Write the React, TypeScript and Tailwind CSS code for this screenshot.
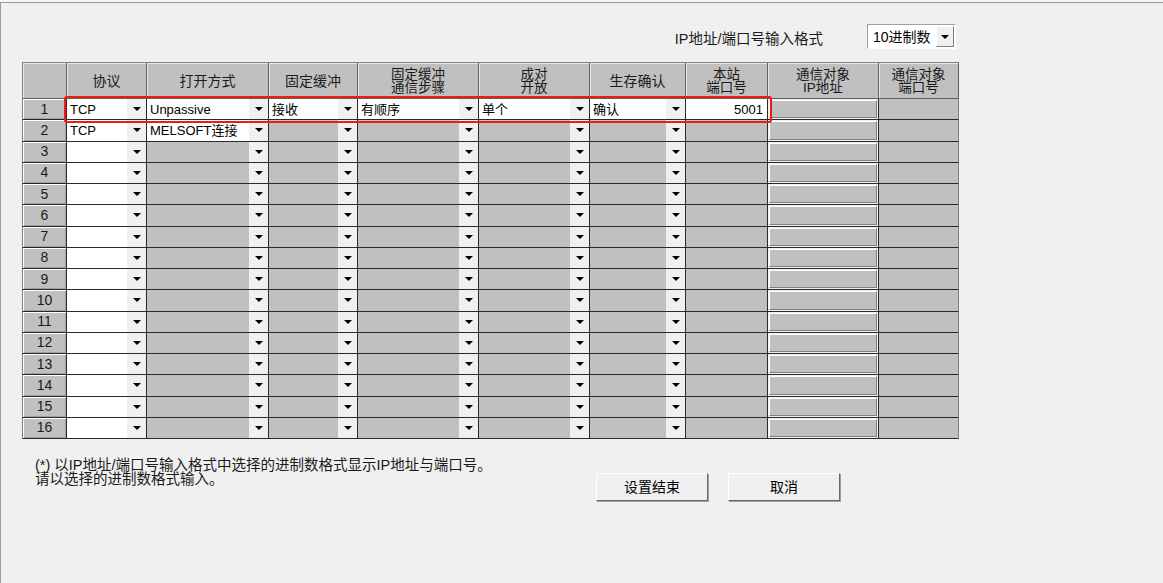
import React from 'react';

type Kind = 'num' | 'combo' | 'text' | 'button' | 'plain';

interface Col {
  w: number;
  kind: Kind;
  title: string[];
}

const cols: Col[] = [
  { w: 45, kind: 'num', title: [] },
  { w: 80, kind: 'combo', title: ['协议'] },
  { w: 122, kind: 'combo', title: ['打开方式'] },
  { w: 89, kind: 'combo', title: ['固定缓冲'] },
  { w: 121, kind: 'combo', title: ['固定缓冲', '通信步骤'] },
  { w: 111, kind: 'combo', title: ['成对', '开放'] },
  { w: 96, kind: 'combo', title: ['生存确认'] },
  { w: 82, kind: 'text', title: ['本站', '端口号'] },
  { w: 111, kind: 'button', title: ['通信对象', 'IP地址'] },
  { w: 80, kind: 'plain', title: ['通信对象', '端口号'] },
];

const row1 = ['', 'TCP', 'Unpassive', '接收', '有顺序', '单个', '确认', '5001', '', ''];
const row2 = ['', 'TCP', 'MELSOFT连接', '', '', '', '', '', '', ''];

const font = { fontFamily: '"Liberation Sans", "Noto Sans CJK SC", sans-serif' };

function Arrow() {
  return <div className="w-0 h-0 border-x-[4px] border-x-transparent border-t-[4px] border-t-black" />;
}

function Cell({ col, value, white, row }: { col: Col; value: string; white: boolean; row: number }) {
  const base = 'h-full border-r border-b border-[#2a2a2a] shrink-0';
  if (col.kind === 'num') {
    return (
      <div
        className={`${base} border-l border-l-[#808080] bg-[#c0c0c0] shadow-[inset_1px_1px_0_#ffffff,inset_-1px_-1px_0_#a0a0a0] flex items-center justify-center text-[14px] text-[#1a1a1a]`}
        style={{ width: col.w }}
      >
        {row}
      </div>
    );
  }
  if (col.kind === 'combo') {
    return (
      <div className={`${base} flex`} style={{ width: col.w }}>
        <div
          className={`flex-1 flex items-center pl-[3px] text-[13px] leading-none text-black whitespace-nowrap overflow-hidden ${
            white ? 'bg-white' : 'bg-[#c0c0c0]'
          }`}
        >
          {value}
        </div>
        <div className="w-[19px] bg-[#f0f0f0] flex items-center justify-center">
          <Arrow />
        </div>
      </div>
    );
  }
  if (col.kind === 'text') {
    return (
      <div
        className={`${base} flex items-center justify-end pr-[4px] text-[13px] leading-none ${
          white ? 'bg-white' : 'bg-[#c0c0c0]'
        }`}
        style={{ width: col.w }}
      >
        {value}
      </div>
    );
  }
  if (col.kind === 'button') {
    return (
      <div className={`${base} bg-[#f0f0f0] p-px`} style={{ width: col.w }}>
        <div className="h-full bg-[#c0c0c0] border-t border-l border-white border-r border-b border-r-[#808080] border-b-[#808080]" />
      </div>
    );
  }
  return <div className={`${base} bg-[#c0c0c0] border-r-[#808080]`} style={{ width: col.w }} />;
}

export default function App() {
  const rows = Array.from({ length: 16 }, (_, i) => i + 1);

  return (
    <div className="w-[1163px] h-[583px] bg-[#f7f7f7] overflow-hidden" style={font}>
      <div className="mt-[2px] h-[581px] border-t border-l border-[#9a9a9a] bg-[#f0f0f0] flex flex-col">
        {/* format selector */}
        <div className="mt-[21px] h-[25px] flex items-center justify-end pr-[207px]">
          <span className="text-[14.5px] leading-none text-[#1a1a1a] mt-[5px]">IP地址/端口号输入格式</span>
          <div className="ml-[44px] w-[89px] h-[25px] bg-white border border-[#a0a0a0] border-r-white border-b-white flex items-center p-px">
            <span className="flex-1 pl-[4px] text-[14px] leading-none text-black whitespace-nowrap">10进制数</span>
            <div className="w-[18px] h-full bg-[#f0f0f0] border border-white border-r-[#808080] border-b-[#808080] flex items-center justify-center">
              <Arrow />
            </div>
          </div>
        </div>

        {/* table */}
        <div className="relative ml-[21px] mt-[13px] w-[937px]">
          <div className="flex h-[37px] border-t border-[#808080]">
            {cols.map((c, i) => (
              <div
                key={i}
                className={`shrink-0 h-full bg-[#c0c0c0] border-r border-b border-[#606060] shadow-[inset_1px_1px_0_#e8e8e8] flex flex-col items-center justify-center text-[#1a1a1a] ${
                  i === 0 ? 'border-l border-l-[#808080]' : ''
                } ${c.title.length === 1 ? 'pt-[2px] text-[14px] leading-[14px]' : 'pt-[1px] text-[13.5px] leading-[13px]'}`}
                style={{ width: c.w }}
              >
                {c.title.map((t) => (
                  <span key={t} className="block h-[13px] leading-[13px]">{t}</span>
                ))}
              </div>
            ))}
          </div>
          {rows.map((r) => (
            <div key={r} className="flex h-[21.25px]">
              {cols.map((c, i) => {
                const value = r === 1 ? row1[i] : r === 2 ? row2[i] : '';
                let white = false;
                if (r === 1) white = true;
                else if (r === 2) white = i === 1 || i === 2;
                else white = i === 1;
                return <Cell key={i} col={c} value={value} white={white} row={r} />;
              })}
            </div>
          ))}

          {/* highlight */}
          <div className="absolute left-[42px] top-[34px] w-[708px] h-[27px] border-2 border-[#f01c14] rounded-[3px] pointer-events-none" />
        </div>

        {/* footnote + buttons */}
        <div className="flex mt-[19px]">
          <div className="ml-[34px] w-[561px] text-[14.5px] leading-[14px] text-[#1a1a1a]">
            <p>(*) 以IP地址/端口号输入格式中选择的进制数格式显示IP地址与端口号。</p>
            <p>请以选择的进制数格式输入。</p>
          </div>
          <div className="flex gap-[20px] mt-[15px]">
            <button className="w-[112px] h-[28px] bg-[#f0f0f0] border border-white border-r-[#6a6a6a] border-b-[#6a6a6a] shadow-[1px_1px_0_#a0a0a0] text-[14px] leading-none text-black">
              设置结束
            </button>
            <button className="w-[112px] h-[28px] bg-[#f0f0f0] border border-white border-r-[#6a6a6a] border-b-[#6a6a6a] shadow-[1px_1px_0_#a0a0a0] text-[14px] leading-none text-black">
              取消
            </button>
          </div>
        </div>
      </div>
    </div>
  );
}
